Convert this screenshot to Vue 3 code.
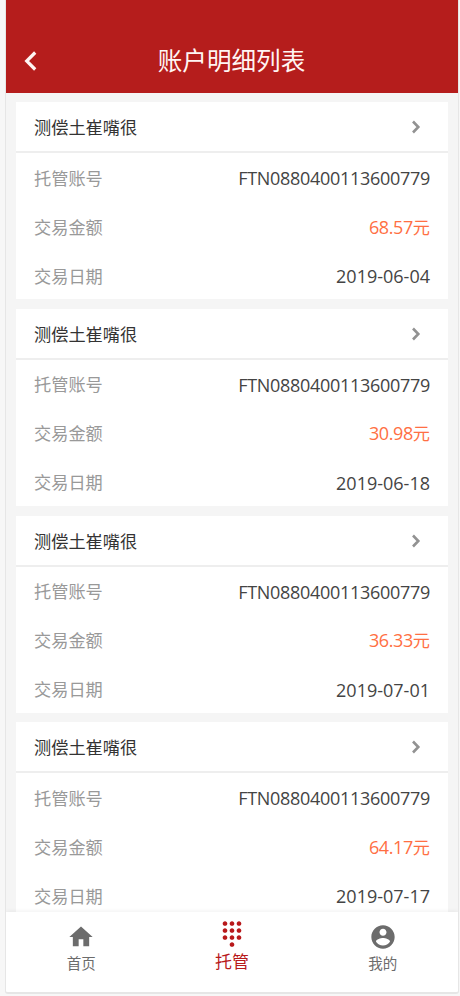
<template>
  <div class="phone">
    <header class="header">
      <button class="back-btn" aria-label="返回">
        <svg width="14" height="22" viewBox="0 0 14 22">
          <path d="M12.2 2.5 L3.7 11 L12.2 19.5" fill="none" stroke="currentColor" stroke-width="3.2" />
        </svg>
      </button>
      <h1 class="header-title">账户明细列表</h1>
    </header>

    <main class="list">
      <section v-for="(item, index) in items" :key="index" class="card">
        <div class="card-title">
          <span>{{ item.name }}</span>
          <svg class="arrow" width="10" height="14" viewBox="0 0 10 14">
            <path d="M2 1.5 L7.3 7 L2 12.5" fill="none" stroke="currentColor" stroke-width="2.6" />
          </svg>
        </div>
        <div class="row">
          <span class="label">托管账号</span>
          <span class="value account">{{ item.account }}</span>
        </div>
        <div class="row">
          <span class="label">交易金额</span>
          <span class="value amount">{{ item.amount }}<span class="unit">元</span></span>
        </div>
        <div class="row">
          <span class="label">交易日期</span>
          <span class="value">{{ item.date }}</span>
        </div>
      </section>
    </main>

    <nav class="tabbar">
      <a v-for="tab in tabs" :key="tab.label" :class="['tab', { active: tab.active }]">
        <svg class="tab-icon" viewBox="0 0 24 24">
          <path :d="tab.icon" fill="currentColor" />
        </svg>
        <span class="tab-label">{{ tab.label }}</span>
      </a>
    </nav>
  </div>
</template>

<script setup>
import { ref } from 'vue';

const items = ref([
  { name: '测偿土崔嘴很', account: 'FTN0880400113600779', amount: '68.57', date: '2019-06-04' },
  { name: '测偿土崔嘴很', account: 'FTN0880400113600779', amount: '30.98', date: '2019-06-18' },
  { name: '测偿土崔嘴很', account: 'FTN0880400113600779', amount: '36.33', date: '2019-07-01' },
  { name: '测偿土崔嘴很', account: 'FTN0880400113600779', amount: '64.17', date: '2019-07-17' }
]);

const tabs = [
  { label: '首页', active: false, icon: 'M10 20v-6h4v6h5v-8h3L12 3 2 12h3v8z' },
  {
    label: '托管',
    active: true,
    icon: 'M12 19c-1.1 0-2 .9-2 2s.9 2 2 2 2-.9 2-2-.9-2-2-2zM6 1c-1.1 0-2 .9-2 2s.9 2 2 2 2-.9 2-2-.9-2-2-2zm0 6c-1.1 0-2 .9-2 2s.9 2 2 2 2-.9 2-2-.9-2-2-2zm0 6c-1.1 0-2 .9-2 2s.9 2 2 2 2-.9 2-2-.9-2-2-2zm12-8c1.1 0 2-.9 2-2s-.9-2-2-2-2 .9-2 2 .9 2 2 2zm-6 8c-1.1 0-2 .9-2 2s.9 2 2 2 2-.9 2-2-.9-2-2-2zm6 0c-1.1 0-2 .9-2 2s.9 2 2 2 2-.9 2-2-.9-2-2-2zm0-6c-1.1 0-2 .9-2 2s.9 2 2 2 2-.9 2-2-.9-2-2-2zm-6 0c-1.1 0-2 .9-2 2s.9 2 2 2 2-.9 2-2-.9-2-2-2zm0-6c-1.1 0-2 .9-2 2s.9 2 2 2 2-.9 2-2-.9-2-2-2z'
  },
  {
    label: '我的',
    active: false,
    icon: 'M12 2C6.48 2 2 6.48 2 12s4.48 10 10 10 10-4.48 10-10S17.52 2 12 2zm0 3c1.66 0 3 1.34 3 3s-1.34 3-3 3-3-1.34-3-3 1.34-3 3-3zm0 14.2c-2.5 0-4.71-1.28-6-3.22.03-1.99 4-3.08 6-3.08 1.99 0 5.97 1.09 6 3.08-1.29 1.94-3.5 3.22-6 3.22z'
  }
];
</script>

<style>
body {
  background-color: #f7f7f7;
}
</style>

<style scoped>
.phone {
  display: flex;
  flex-direction: column;
  box-sizing: border-box;
  width: 454px;
  height: 994px;
  margin-left: 5px;
  border: 1px solid #e6e6e6;
  border-top: none;
  border-bottom-width: 2px;
  border-radius: 0 0 3px 3px;
  background-color: #f5f5f5;
  overflow: hidden;
  font-family: "Open Sans", "Noto Sans CJK SC", sans-serif;
}

.header {
  display: grid;
  grid-template-columns: 50px 1fr 50px;
  align-items: center;
  flex: none;
  box-sizing: border-box;
  height: 93px;
  padding-top: 29px;
  background-color: #b51d1c;
  color: #fff5f3;
}

.back-btn {
  display: flex;
  padding: 0 0 0 17px;
  border: none;
  background: none;
  color: inherit;
  cursor: pointer;
}

.header-title {
  margin: 0;
  padding: 0 1px 1px 0;
  font-size: 24.6px;
  font-weight: 400;
  line-height: 36px;
  text-align: center;
}

.list {
  display: flex;
  flex-direction: column;
  gap: 9.8px;
  flex: 1;
  min-height: 0;
  padding: 9px 10px 0;
  overflow: hidden;
}

.card {
  flex: none;
  height: 197px;
  background-color: #fff;
  font-size: 17.2px;
}

.card-title {
  display: flex;
  justify-content: space-between;
  align-items: center;
  height: 49px;
  padding: 0 27px 0 18px;
  border-bottom: 2px solid #eee;
  color: #333;
}

.arrow {
  margin-top: 1px;
  color: #929292;
}

.row {
  display: flex;
  justify-content: space-between;
  align-items: center;
  height: 49px;
  padding: 1px 18px 0;
  box-sizing: border-box;
  line-height: 24px;
}

.label {
  padding-top: 1px;
  color: #999;
}

.value {
  color: #444;
  font-size: 18px;
}

.account {
  letter-spacing: -0.3px;
}

.amount {
  color: #ff6f43;
  letter-spacing: -0.4px;
}

.unit {
  font-size: 17.2px;
  letter-spacing: 0;
}

.tabbar {
  display: flex;
  flex: none;
  height: 80px;
  background-color: #fff;
  box-shadow: 0 -1px 4px rgba(0, 0, 0, 0.06);
}

.tab {
  display: flex;
  flex: 1;
  flex-direction: column;
  align-items: center;
  padding-top: 11px;
  color: #6c6c6c;
  font-size: 14.5px;
  line-height: 25px;
}

.tab-icon {
  width: 28px;
  height: 28px;
}

.tab.active {
  padding-top: 8px;
  color: #b8191b;
  font-size: 17px;
  line-height: 28px;
}
</style>
